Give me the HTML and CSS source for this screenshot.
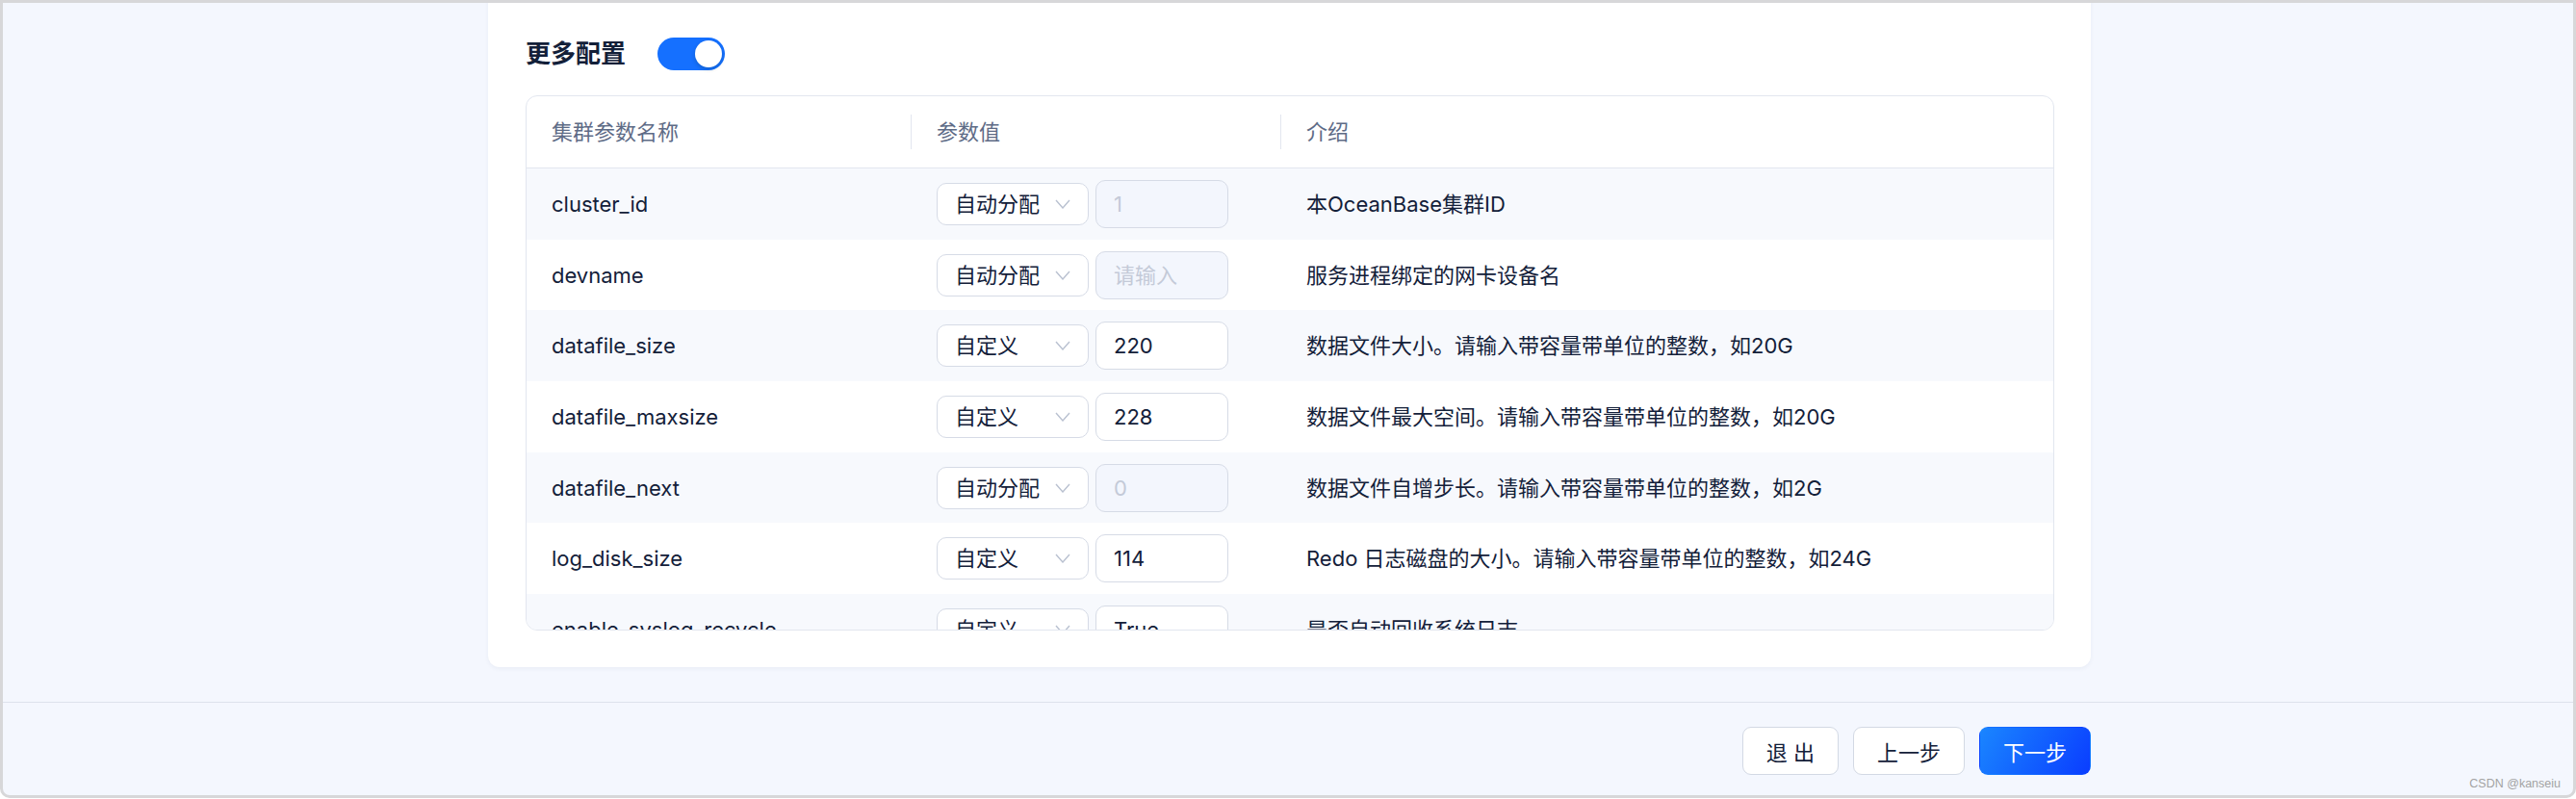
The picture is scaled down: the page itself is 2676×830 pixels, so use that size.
FILE: index.html
```html
<!DOCTYPE html>
<html lang="zh-CN">
<head>
    <meta charset="UTF-8">
    <meta name="viewport" content="width=device-width, initial-scale=1.0">
    <title>部署配置 - 更多配置</title>
    <link rel="stylesheet" href="styles.css">
</head>
<body>
    <div class="window">
        <main class="main">
            <section class="card">
                <div class="card-title">
                    <h3>更多配置</h3>
                    <button class="switch switch-on" type="button"><span class="knob"></span></button>
                </div>

                <div class="param-table">
                    <div class="thead">
                        <div class="th">集群参数名称</div>
                        <div class="th">参数值</div>
                        <div class="th">介绍</div>
                    </div>

                    <div class="row">
                        <div class="cell">cluster_id</div>
                        <div class="cell value-cell">
                            <div class="select">自动分配<svg class="arrow" viewBox="0 0 16 10"><polyline points="1,1 8,9 15,1"/></svg></div>
                            <input class="field" type="text" value="1" disabled>
                        </div>
                        <div class="cell">本OceanBase集群ID</div>
                    </div>

                    <div class="row">
                        <div class="cell">devname</div>
                        <div class="cell value-cell">
                            <div class="select">自动分配<svg class="arrow" viewBox="0 0 16 10"><polyline points="1,1 8,9 15,1"/></svg></div>
                            <input class="field" type="text" placeholder="请输入" disabled>
                        </div>
                        <div class="cell">服务进程绑定的网卡设备名</div>
                    </div>

                    <div class="row">
                        <div class="cell">datafile_size</div>
                        <div class="cell value-cell">
                            <div class="select">自定义<svg class="arrow" viewBox="0 0 16 10"><polyline points="1,1 8,9 15,1"/></svg></div>
                            <input class="field" type="text" value="220">
                        </div>
                        <div class="cell">数据文件大小。请输入带容量带单位的整数，如20G</div>
                    </div>

                    <div class="row">
                        <div class="cell">datafile_maxsize</div>
                        <div class="cell value-cell">
                            <div class="select">自定义<svg class="arrow" viewBox="0 0 16 10"><polyline points="1,1 8,9 15,1"/></svg></div>
                            <input class="field" type="text" value="228">
                        </div>
                        <div class="cell">数据文件最大空间。请输入带容量带单位的整数，如20G</div>
                    </div>

                    <div class="row">
                        <div class="cell">datafile_next</div>
                        <div class="cell value-cell">
                            <div class="select">自动分配<svg class="arrow" viewBox="0 0 16 10"><polyline points="1,1 8,9 15,1"/></svg></div>
                            <input class="field" type="text" value="0" disabled>
                        </div>
                        <div class="cell">数据文件自增步长。请输入带容量带单位的整数，如2G</div>
                    </div>

                    <div class="row">
                        <div class="cell">log_disk_size</div>
                        <div class="cell value-cell">
                            <div class="select">自定义<svg class="arrow" viewBox="0 0 16 10"><polyline points="1,1 8,9 15,1"/></svg></div>
                            <input class="field" type="text" value="114">
                        </div>
                        <div class="cell">Redo 日志磁盘的大小。请输入带容量带单位的整数，如24G</div>
                    </div>

                    <div class="row">
                        <div class="cell">enable_syslog_recycle</div>
                        <div class="cell value-cell">
                            <div class="select">自定义<svg class="arrow" viewBox="0 0 16 10"><polyline points="1,1 8,9 15,1"/></svg></div>
                            <input class="field" type="text" value="True">
                        </div>
                        <div class="cell">是否自动回收系统日志</div>
                    </div>
                </div>
            </section>
        </main>

        <footer class="footer">
            <div class="actions">
                <button class="btn" type="button">退 出</button>
                <button class="btn" type="button">上一步</button>
                <button class="btn btn-primary" type="button">下一步</button>
            </div>
        </footer>

        <span class="watermark">CSDN @kanseiu</span>
    </div>
</body>
</html>
```

FILE: styles.css
```css
body {
    margin: 0;
    background: #fff;
    font-family: Inter, "Noto Sans CJK SC", sans-serif;
    color: #132039;
}

.window {
    position: relative;
    display: flex;
    flex-direction: column;
    height: 829px;
    box-sizing: border-box;
    border: 3px solid #d7d7d9;
    border-radius: 0 0 10px 10px;
    background: #f4f7fe;
    overflow: hidden;
}

.main {
    flex: none;
    height: 726px;
    display: flex;
    flex-direction: column;
    justify-content: flex-end;
    overflow: hidden;
}

.card {
    flex: none;
    width: 1665px;
    margin-left: 504px;
    margin-bottom: 36px;
    box-sizing: border-box;
    padding: 40px 38px 38px 39px;
    background: #fff;
    border-radius: 12px;
    box-shadow: 0 2px 4px rgba(30, 50, 100, 0.05);
}

.card-title {
    display: flex;
    align-items: center;
    height: 70px;
    margin-bottom: 8px;
}

    .card-title h3 {
        margin: 0;
        font-size: 26px;
        font-weight: 600;
        line-height: 34px;
        color: #132039;
    }

.switch {
    width: 70px;
    height: 34px;
    margin-left: 33px;
    padding: 3px;
    border: none;
    border-radius: 17px;
    background: #ccd3df;
    display: flex;
    align-items: center;
}

.switch-on {
    background: #1570ff;
    justify-content: flex-end;
}

    .switch .knob {
        width: 28px;
        height: 28px;
        border-radius: 50%;
        background: #fff;
        box-shadow: 0 2px 4px rgba(0, 35, 11, 0.2);
    }

.param-table {
    height: 556px;
    box-sizing: border-box;
    border: 1px solid #e2e6ef;
    border-radius: 12px;
    overflow: hidden;
    font-size: 22px;
    line-height: 30px;
}

.thead,
.row {
    display: grid;
    grid-template-columns: 399px 384px 1fr;
    align-items: center;
}

.thead {
    height: 75px;
    box-sizing: border-box;
    border-bottom: 1px solid #e2e6ef;
    color: #5e6b86;
}

    .thead .th {
        display: flex;
        align-items: center;
        height: 36px;
        padding-left: 26px;
    }

        .thead .th + .th {
            border-left: 1px solid #e2e6ef;
        }

.row {
    height: 73.7px;
}

    .row:nth-child(even) {
        background: #f7f9fd;
    }

    .row .cell {
        padding-left: 27px;
        white-space: nowrap;
    }

        .row .cell:first-child {
            padding-left: 26px;
        }

.value-cell {
    display: flex;
    align-items: center;
    gap: 7px;
}

.select {
    display: flex;
    align-items: center;
    justify-content: space-between;
    width: 158px;
    height: 44px;
    box-sizing: border-box;
    padding: 0 18px 0 18px;
    border: 1px solid #d6dbe6;
    border-radius: 10px;
    background: #fff;
    color: #132039;
}

    .select .arrow {
        width: 16px;
        height: 10px;
        fill: none;
        stroke: #b9c1d0;
        stroke-width: 1.4;
    }

.field {
    width: 138px;
    height: 50px;
    box-sizing: border-box;
    padding: 0 18px;
    border: 1px solid #d6dbe6;
    border-radius: 10px;
    background: #fff;
    font-family: inherit;
    font-size: 22px;
    color: #132039;
    outline: none;
}

    .field:disabled {
        background: #f3f6fd;
        color: #c4cad8;
    }

    .field::placeholder {
        color: #c4cad8;
    }

.footer {
    flex: 1;
    border-top: 1px solid #dde2ec;
    padding-top: 25px;
}

.actions {
    display: flex;
    justify-content: flex-end;
    gap: 15px;
    width: 1665px;
    margin-left: 504px;
}

.btn {
    height: 50px;
    padding: 0 24px;
    border: 1px solid #d3d9e4;
    border-radius: 9px;
    background: #fff;
    font-family: inherit;
    font-size: 22px;
    color: #132039;
}

.btn-primary {
    border-color: transparent;
    background: linear-gradient(120deg, #1a86ff, #0a3dff);
    color: #fff;
}

.watermark {
    position: absolute;
    right: 13px;
    bottom: 5px;
    font-family: "Liberation Sans", sans-serif;
    font-size: 12.5px;
    line-height: 14px;
    color: #a3a3a3;
}
```
